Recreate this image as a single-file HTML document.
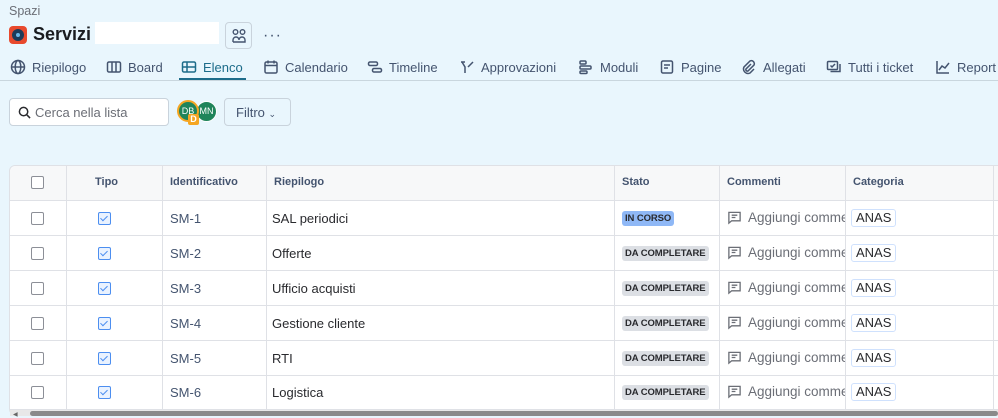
<!DOCTYPE html>
<html><head><meta charset="utf-8"><style>
*{box-sizing:border-box;margin:0;padding:0}
body{width:998px;height:416px;overflow:hidden;background:#e9f6fd;font-family:"Liberation Sans",sans-serif;color:#292a2e;position:relative}
.a{position:absolute}
.tab{position:absolute;top:58px;font-size:13px;color:#44546f;display:flex;align-items:center;gap:6px;height:18px;white-space:nowrap}
.tab svg{width:16px;height:16px;stroke:#44546f;fill:none;stroke-width:1.5}
.vl{position:absolute;top:166px;width:1px;height:244px;background:#dfe1e6}
.hl{position:absolute;left:10px;width:988px;height:1px;background:#dfe1e6}
.th{position:absolute;top:176px;font-size:11px;font-weight:bold;color:#44546f}
.cb{position:absolute;left:31px;width:13px;height:13px;border:1.5px solid #8c8f97;border-radius:2px;background:#fff}
.tp{position:absolute;left:98px;width:13px;height:13px;border:1.5px solid #4c8ef0;border-radius:2px;background:#e9f2ff}
.tp:after{content:"";position:absolute;left:3px;top:1px;width:3px;height:6px;border:solid #4c8ef0;border-width:0 1.5px 1.5px 0;transform:rotate(45deg)}
.id{position:absolute;left:170px;font-size:13px;color:#44546f}
.rp{position:absolute;left:272px;font-size:13px;color:#292a2e}
.lz{position:absolute;left:622px;height:15px;padding:0 3px;font-size:9.5px;font-weight:bold;line-height:15px;border-radius:3px;background:#dcdfe4;color:#292a2e;letter-spacing:-0.1px}
.cm{position:absolute;left:727px;font-size:13.5px;color:#6b6e76;display:flex;gap:6px;align-items:center;width:118px;overflow:hidden;white-space:nowrap}
.cm svg{width:15px;height:15px;stroke:#6b6e76;fill:none;stroke-width:1.4;flex:none}
.an{position:absolute;left:851px;height:18px;padding:0 4px;border:1px solid #cfe1fd;border-radius:3px;font-size:13px;line-height:16px;background:#fff;color:#292a2e}
</style></head><body>
<div class="a" style="left:9px;top:4px;font-size:12.5px;color:#6b6e76">Spazi</div>
<div class="a" style="left:9px;top:26px;width:18px;height:18px;border-radius:4px;background:#e8492d"><div class="a" style="left:3px;top:3px;width:12px;height:12px;border-radius:50%;background:#1d3b5a"></div><div class="a" style="left:7px;top:7px;width:4px;height:4px;border-radius:50%;background:#6bb7e8"></div></div>
<div class="a" style="left:33px;top:24px;font-size:18px;font-weight:bold;color:#1a1c20">Servizi</div>
<div class="a" style="left:95px;top:22px;width:124px;height:22px;background:#fff"></div>
<div class="a" style="left:225px;top:22px;width:27px;height:27px;border:1px solid #c9d3dc;border-radius:4px"><svg class="a" style="left:5px;top:5px" width="16" height="16" viewBox="0 0 16 16" fill="none" stroke="#44546f" stroke-width="1.4"><circle cx="4.5" cy="4" r="2.3"/><circle cx="11.5" cy="4" r="2.3"/><path d="M2 14v-2a3 3 0 0 1 6 0M8 12a3 3 0 0 1 6 0v2H2"/></svg></div>
<div class="a" style="left:263px;top:27px;font-size:16px;color:#44546f;letter-spacing:1px">···</div>

<div class="tab" style="left:10px"><svg viewBox="0 0 16 16"><circle cx="8" cy="8" r="6.5"/><ellipse cx="8" cy="8" rx="2.8" ry="6.5"/><path d="M1.5 8h13"/></svg>Riepilogo</div>
<div class="tab" style="left:106px"><svg viewBox="0 0 16 16"><rect x="1.5" y="3" width="13" height="10" rx="1.5"/><path d="M6 3v10M10 3v10"/></svg>Board</div>
<div class="tab" style="left:181px;color:#1d6c8a"><svg viewBox="0 0 16 16" style="stroke:#1d6c8a"><rect x="1.5" y="3" width="13" height="10" rx="1.5"/><path d="M1.5 8h13M6 3v10"/></svg>Elenco</div>
<div class="a" style="left:179px;top:78px;width:67px;height:2px;background:#1d6c8a"></div>
<div class="tab" style="left:263px"><svg viewBox="0 0 16 16"><rect x="2" y="3" width="12" height="11" rx="1.5"/><path d="M2 6.5h12M5 1.5v3M11 1.5v3"/></svg>Calendario</div>
<div class="tab" style="left:367px"><svg viewBox="0 0 16 16"><rect x="1.5" y="3" width="9" height="3.5" rx="1.5"/><rect x="5.5" y="9.5" width="9" height="3.5" rx="1.5"/></svg>Timeline</div>
<div class="tab" style="left:459px"><svg viewBox="0 0 16 16"><path d="M2 3h4M3 3l3 5v6M14 3l-5 5"/></svg>Approvazioni</div>
<div class="tab" style="left:578px"><svg viewBox="0 0 16 16"><rect x="2" y="2" width="6" height="3" rx="1"/><rect x="2" y="7" width="11" height="3" rx="1"/><rect x="2" y="12" width="7" height="2.5" rx="1"/></svg>Moduli</div>
<div class="tab" style="left:659px"><svg viewBox="0 0 16 16"><rect x="2.5" y="2" width="11" height="12" rx="1.5"/><path d="M5 6h6M5 9h4"/></svg>Pagine</div>
<div class="tab" style="left:741px"><svg viewBox="0 0 16 16"><path d="M10 5l-5 5a1.5 1.5 0 0 0 2 2l6-6a3 3 0 0 0-4-4L3 8a4.5 4.5 0 0 0 6 6l4-4"/></svg>Allegati</div>
<div class="tab" style="left:826px"><svg viewBox="0 0 16 16"><rect x="1.5" y="2.5" width="10" height="8" rx="1"/><path d="M4.5 6.5l1.5 1.5 3-3M14 5v7.5H4.5"/></svg>Tutti i ticket</div>
<div class="tab" style="left:935px"><svg viewBox="0 0 16 16"><path d="M2 2v12h12M4 11l3-4 3 2 4-5"/></svg>Report</div>
<div class="a" style="left:0;top:80px;width:998px;height:1px;background:#c9d6de"></div>

<div class="a" style="left:9px;top:98px;width:160px;height:28px;border:1px solid #c9d3dc;border-radius:4px;background:#fff"><svg class="a" style="left:8px;top:7px" width="13" height="13" viewBox="0 0 14 14" fill="none" stroke="#292a2e" stroke-width="1.6"><circle cx="6" cy="6" r="4.5"/><path d="M9.5 9.5l3.5 3.5"/></svg><span class="a" style="left:25px;top:6px;font-size:13px;color:#6b6e76">Cerca nella lista</span></div>
<div class="a" style="left:196px;top:101px;width:21px;height:21px;border-radius:50%;background:#1f845a;border:1px solid #fff;color:#fff;font-size:9px;line-height:19px;text-align:center">MN</div>
<div class="a" style="left:177px;top:100px;width:22px;height:22px;border-radius:50%;background:#1f845a;border:2px solid #f5a623;color:#fff;font-size:9px;line-height:18px;text-align:center">DB</div>
<div class="a" style="left:188px;top:114px;width:11px;height:11px;border-radius:2px;background:#f5a623;color:#fff;font-size:9px;font-weight:bold;line-height:11px;text-align:center">D</div>
<div class="a" style="left:224px;top:98px;width:67px;height:28px;border:1px solid #c9d3dc;border-radius:4px;font-size:13px;color:#44546f;padding:6px 0 0 11px">Filtro <span style="font-size:9px">&#8964;</span></div>

<div class="a" style="left:9px;top:165px;width:995px;height:250px;background:#fff;border:1px solid #dfe1e6;border-radius:6px"></div>
<div class="a" style="left:10px;top:166px;width:988px;height:34px;background:#f7f8f9;border-radius:6px 0 0 0"></div>
<div class="vl" style="left:66px"></div><div class="vl" style="left:162px"></div><div class="vl" style="left:266px"></div><div class="vl" style="left:614px"></div><div class="vl" style="left:719px"></div><div class="vl" style="left:845px"></div><div class="vl" style="left:993px"></div>
<div class="hl" style="top:200px"></div><div class="hl" style="top:235px"></div><div class="hl" style="top:270px"></div><div class="hl" style="top:305px"></div><div class="hl" style="top:340px"></div><div class="hl" style="top:375px"></div><div class="hl" style="top:409px"></div>
<div class="cb" style="top:176px"></div>
<div class="th" style="left:95px">Tipo</div><div class="th" style="left:170px">Identificativo</div><div class="th" style="left:274px">Riepilogo</div><div class="th" style="left:622px">Stato</div><div class="th" style="left:727px">Commenti</div><div class="th" style="left:853px">Categoria</div>

<div class="cb" style="top:212px"></div><div class="tp" style="top:212px"></div><div class="id" style="top:211px">SM-1</div><div class="rp" style="top:211px">SAL periodici</div><div class="lz" style="top:211px;background:#8fb8f6">IN CORSO</div>
<div class="cb" style="top:247px"></div><div class="tp" style="top:247px"></div><div class="id" style="top:246px">SM-2</div><div class="rp" style="top:246px">Offerte</div><div class="lz" style="top:246px">DA COMPLETARE</div>
<div class="cb" style="top:282px"></div><div class="tp" style="top:282px"></div><div class="id" style="top:281px">SM-3</div><div class="rp" style="top:281px">Ufficio acquisti</div><div class="lz" style="top:281px">DA COMPLETARE</div>
<div class="cb" style="top:317px"></div><div class="tp" style="top:317px"></div><div class="id" style="top:316px">SM-4</div><div class="rp" style="top:316px">Gestione cliente</div><div class="lz" style="top:316px">DA COMPLETARE</div>
<div class="cb" style="top:352px"></div><div class="tp" style="top:352px"></div><div class="id" style="top:351px">SM-5</div><div class="rp" style="top:351px">RTI</div><div class="lz" style="top:351px">DA COMPLETARE</div>
<div class="cb" style="top:386px"></div><div class="tp" style="top:386px"></div><div class="id" style="top:385px">SM-6</div><div class="rp" style="top:385px">Logistica</div><div class="lz" style="top:385px">DA COMPLETARE</div>

<div class="cm" style="top:210px"><svg viewBox="0 0 16 16"><path d="M2 2.5h12v9H5l-3 2.5z"/><path d="M5 5.5h6M5 8h4"/></svg>Aggiungi commento</div>
<div class="cm" style="top:245px"><svg viewBox="0 0 16 16"><path d="M2 2.5h12v9H5l-3 2.5z"/><path d="M5 5.5h6M5 8h4"/></svg>Aggiungi commento</div>
<div class="cm" style="top:280px"><svg viewBox="0 0 16 16"><path d="M2 2.5h12v9H5l-3 2.5z"/><path d="M5 5.5h6M5 8h4"/></svg>Aggiungi commento</div>
<div class="cm" style="top:315px"><svg viewBox="0 0 16 16"><path d="M2 2.5h12v9H5l-3 2.5z"/><path d="M5 5.5h6M5 8h4"/></svg>Aggiungi commento</div>
<div class="cm" style="top:350px"><svg viewBox="0 0 16 16"><path d="M2 2.5h12v9H5l-3 2.5z"/><path d="M5 5.5h6M5 8h4"/></svg>Aggiungi commento</div>
<div class="cm" style="top:384px"><svg viewBox="0 0 16 16"><path d="M2 2.5h12v9H5l-3 2.5z"/><path d="M5 5.5h6M5 8h4"/></svg>Aggiungi commento</div>

<div class="an" style="top:209px">ANAS</div><div class="an" style="top:244px">ANAS</div><div class="an" style="top:279px">ANAS</div><div class="an" style="top:314px">ANAS</div><div class="an" style="top:349px">ANAS</div><div class="an" style="top:383px">ANAS</div>

<div class="a" style="left:10px;top:410px;width:988px;height:6px;background:#e8e8e8"></div>
<div class="a" style="left:13px;top:411px;font-size:6px;color:#666">&#9664;</div>
<div class="a" style="left:30px;top:411px;width:968px;height:5px;border-radius:3px;background:#8a8a8a"></div>
</body></html>
